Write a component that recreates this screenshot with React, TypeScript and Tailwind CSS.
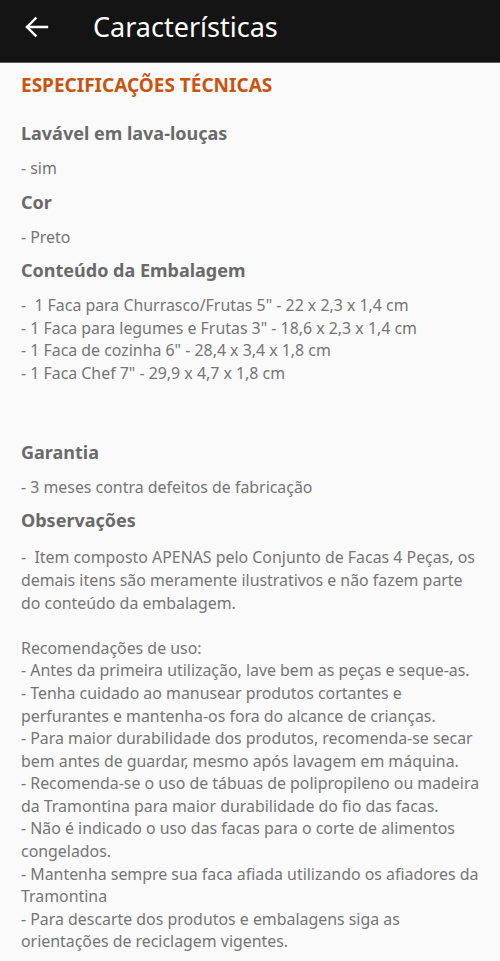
import React from "react";

const font = { fontFamily: '"Noto Sans", "Open Sans", sans-serif' };

function Section({ title, children, first, gap }: { title: string; children: React.ReactNode; first?: boolean; gap?: boolean }) {
  return (
    <div className={first ? "" : "mt-[8px]"}>
      <h3 className="text-[18px] leading-[28px] font-bold text-[#6a6a6a]">{title}</h3>
      <div className={(gap ? "mt-[12px]" : "mt-[10px]") + " text-[15.9px] leading-[22.6px] text-[#757575]"}>{children}</div>
    </div>
  );
}

export default function App() {
  return (
    <div style={font} className="min-h-[961px] bg-[#fafafa]">
      <header className="h-[63px] bg-[#141414] border-b border-[#5a5a5a] flex items-start pt-[10px]">
        <div className="w-[93px] h-[34px] flex items-center pl-[24px]">
          <svg width="25" height="22" viewBox="0 0 25 22" fill="none">
            <path d="M23 11H3M11.5 2.5L3 11l8.5 8.5" stroke="white" strokeWidth="2.4" strokeLinecap="square" strokeLinejoin="miter" />
          </svg>
        </div>
        <h1 className="text-white text-[27px] leading-[34px]">Características</h1>
      </header>
      <main className="pl-[21px] pr-[14px] pt-[8px] pb-[20px]">
        <h2 className="text-[19px] leading-[28px] font-bold text-[#c9540f] mb-[20px]">ESPECIFICAÇÕES TÉCNICAS</h2>
        <Section title="Lavável em lava-louças" first>
          <p>- sim</p>
        </Section>
        <Section title="Cor">
          <p>- Preto</p>
        </Section>
        <Section title="Conteúdo da Embalagem">
          <p className="whitespace-pre">-  1 Faca para Churrasco/Frutas 5" - 22 x 2,3 x 1,4 cm</p>
          <p>- 1 Faca para legumes e Frutas 3" - 18,6 x 2,3 x 1,4 cm</p>
          <p>- 1 Faca de cozinha 6" - 28,4 x 3,4 x 1,8 cm</p>
          <p>- 1 Faca Chef 7" - 29,9 x 4,7 x 1,8 cm</p>
          <p>&nbsp;</p>
          <p>&nbsp;</p>
        </Section>
        <Section title="Garantia">
          <p>- 3 meses contra defeitos de fabricação</p>
        </Section>
        <Section title="Observações" gap>
          <p className="whitespace-pre-wrap">-  Item composto APENAS pelo Conjunto de Facas 4 Peças, os demais itens são meramente ilustrativos e não fazem parte do conteúdo da embalagem.</p>
          <p>&nbsp;</p>
          <p>Recomendações de uso:</p>
          <p>- Antes da primeira utilização, lave bem as peças e seque-as.</p>
          <p>- Tenha cuidado ao manusear produtos cortantes e perfurantes e mantenha-os fora do alcance de crianças.</p>
          <p>- Para maior durabilidade dos produtos, recomenda-se secar bem antes de guardar, mesmo após lavagem em máquina.</p>
          <p>- Recomenda-se o uso de tábuas de polipropileno ou madeira da Tramontina para maior durabilidade do fio das facas.</p>
          <p>- Não é indicado o uso das facas para o corte de alimentos congelados.</p>
          <p>- Mantenha sempre sua faca afiada utilizando os afiadores da Tramontina</p>
          <p>- Para descarte dos produtos e embalagens siga as orientações de reciclagem vigentes.</p>
        </Section>
      </main>
    </div>
  );
}
